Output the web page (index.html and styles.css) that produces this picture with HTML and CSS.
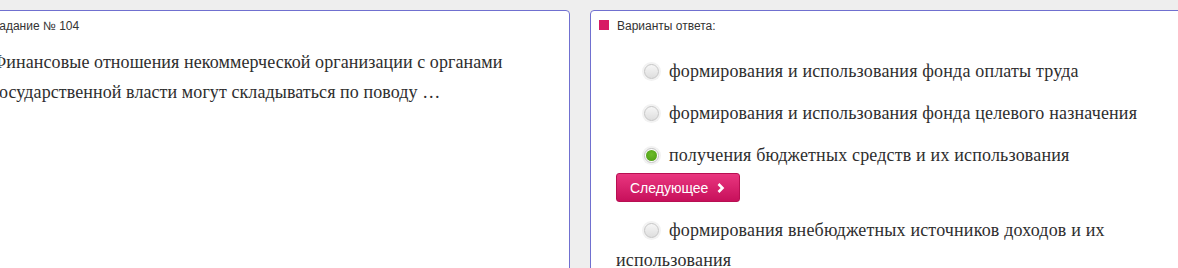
FILE: index.html
```html
<!DOCTYPE html>
<html lang="ru">
<head>
<meta charset="utf-8">
<title>Задание № 104</title>
<link rel="stylesheet" href="styles.css">
</head>
<body>
<div class="row">
  <section class="panel panel-question">
    <div class="panel-title">Задание № 104</div>
    <p class="question">Финансовые отношения некоммерческой организации с органами государственной власти могут складываться по поводу …</p>
  </section>
  <section class="panel panel-answers">
    <div class="answers-head"><span class="square"></span><span class="panel-title">Варианты ответа:</span></div>
    <div class="answers">
      <div class="option"><span class="radio"></span>формирования и использования фонда оплаты труда</div>
      <div class="option"><span class="radio"></span>формирования и использования фонда целевого назначения</div>
      <div class="option"><span class="radio checked"></span>получения бюджетных средств и их использования</div>
      <button class="btn-next" type="button">Следующее <svg class="chev" width="8" height="10" viewBox="0 0 8 10"><path d="M1.5 1 L5.5 5 L1.5 9" fill="none" stroke="#fff" stroke-width="2.6"/></svg></button>
      <div class="option"><span class="radio"></span>формирования внебюджетных источников доходов и их использования</div>
    </div>
  </section>
</div>
</body>
</html>
```

FILE: styles.css
```css
html, body {
  margin: 0;
  padding: 0;
  overflow: hidden;
}
body {
  background: #eeeeee;
  font-family: "Liberation Sans", Arial, sans-serif;
  color: #333;
}
.row {
  display: flex;
  gap: 20px;
  padding-top: 10px;
  margin-left: -30px;
}
.panel {
  background: #fff;
  border: 1px solid #7070d0;
  border-radius: 4px;
  min-height: 300px;
  box-sizing: border-box;
  flex-shrink: 0;
}
.panel-question {
  width: 600px;
  padding: 7px 20px 0 21px;
}
.panel-title {
  font-size: 12px;
  line-height: 16px;
  color: #333;
}
.question {
  margin: 13px 0 0 0;
  font-family: "Liberation Serif", "Times New Roman", serif;
  font-size: 18px;
  letter-spacing: 0.08px;
  line-height: 30px;
  color: #2e2e2e;
}
.panel-answers {
  width: 620px;
  padding: 7px 40px 0 25px;
}
.answers-head {
  display: flex;
  align-items: center;
  gap: 8px;
  margin-left: -17px;
}
.square {
  width: 10px;
  height: 10px;
  background: #d81b64;
  margin-top: -3px;
}
.answers {
  margin-top: 22px;
  font-family: "Liberation Serif", "Times New Roman", serif;
  font-size: 18px;
  letter-spacing: 0.17px;
  line-height: 30px;
  color: #2e2e2e;
}
.option {
  margin-bottom: 12px;
}
.radio {
  display: inline-block;
  vertical-align: middle;
  width: 13px;
  height: 13px;
  border-radius: 50%;
  border: 1px solid #c4c4c4;
  background: linear-gradient(#f6f6f6, #dedede);
  box-shadow: 0 0 0 2px #f2f2f2;
  margin: -3px 10px 0 28px;
  position: relative;
}
.radio.checked {
  background: #fff;
}
.radio.checked::after {
  content: "";
  position: absolute;
  left: 1px;
  top: 1px;
  width: 11px;
  height: 11px;
  border-radius: 50%;
  background: radial-gradient(circle at 50% 40%, #6cbc2a, #4c9a14);
}
.option:nth-of-type(3) {
  margin-bottom: 3px;
}
.btn-next {
  display: flex;
  align-items: center;
  gap: 9px;
  height: 29px;
  padding: 0 14px 0 13px;
  border: 1px solid #b80f52;
  border-radius: 3px;
  background: linear-gradient(#e9367f, #c7105b);
  color: #fff;
  font-family: "Liberation Sans", Arial, sans-serif;
  font-size: 14px;
  letter-spacing: 0;
  margin-bottom: 13px;
  cursor: pointer;
}
.chev {
  display: block;
}
```
